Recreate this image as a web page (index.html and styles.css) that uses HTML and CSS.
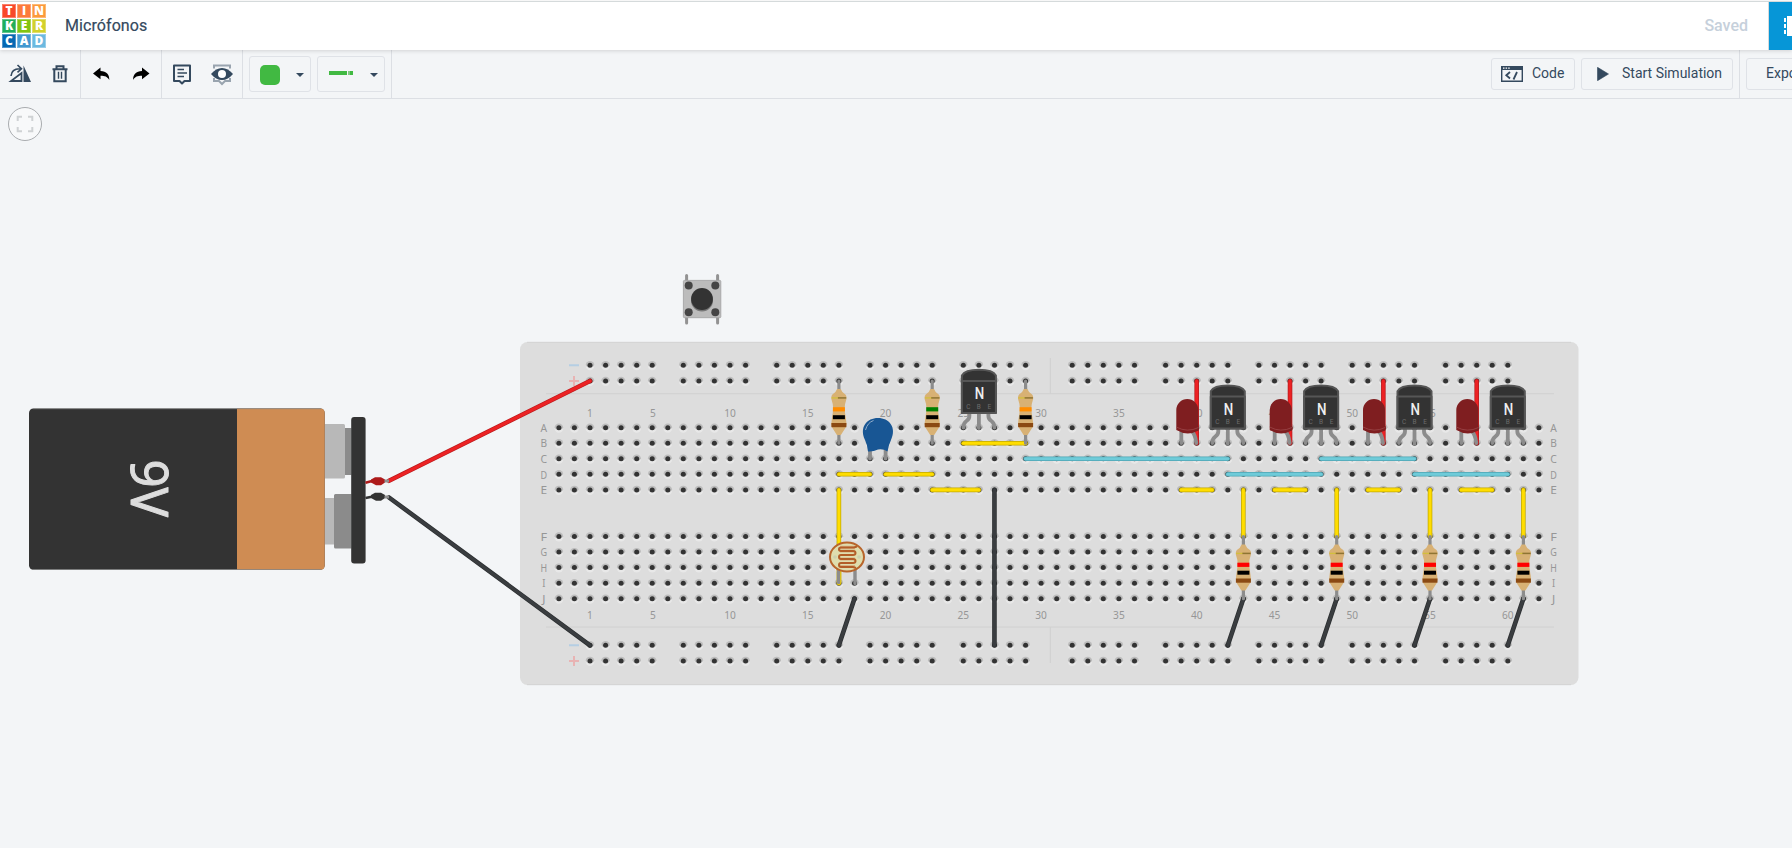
FILE: index.html
```html
<!DOCTYPE html>
<html lang="es">
<head>
<meta charset="utf-8">
<title>Micrófonos</title>
<link rel="stylesheet" href="styles.css">
</head>
<body>
<div class="app">
  <header class="header">
    <div class="logo">
      <span class="tile t1">T</span><span class="tile t2">I</span><span class="tile t3">N</span>
      <span class="tile t4">K</span><span class="tile t5">E</span><span class="tile t6">R</span>
      <span class="tile t7">C</span><span class="tile t8">A</span><span class="tile t9">D</span>
    </div>
    <h1 class="title">Micrófonos</h1>
    <span class="saved">Saved</span>
    <div class="view-tab">
      <svg width="24" height="48" viewBox="0 0 24 48"><path d="M19 14h14v20H19z" fill="#fff"/><path d="M16 16h2v4h-2zM16 22h2v4h-2zM16 28h2v4h-2z" fill="#fff"/></svg>
    </div>
  </header>
  <nav class="toolbar">
    <div class="group g-edit">
      <svg class="icon" width="24" height="24" viewBox="0 0 24 24"><path d="M15.500 3.500V20H23z" fill="#34495e"/><path d="M3 19H13.500V11z" fill="none" stroke="#34495e" stroke-width="1.800"/><path d="M3 14C3.500 8.500 7 6.500 12.500 6.800M9.500 3l4 3.800-4 3.500" fill="none" stroke="#34495e" stroke-width="1.600"/></svg>
      <svg class="icon" width="24" height="24" viewBox="0 0 24 24"><path d="M4.500 7.200h15M8.500 7V4.300h7V7M6.300 8v11.200h11.400V8" fill="none" stroke="#34495e" stroke-width="2"/><path d="M10.500 9.800v7M13.500 9.800v7" stroke="#34495e" stroke-width="1.400"/></svg>
    </div>
    <div class="group g-history">
      <svg class="icon" width="24" height="24" viewBox="0 0 24 24"><path d="M3 11.500L10.500 5.500v3.500c6 .2 9 3.500 8.800 9-2-3.300-4.300-4.200-8.800-4.200v3.500z" fill="#000"/></svg>
      <svg class="icon" width="24" height="24" viewBox="0 0 24 24"><path d="M20.500 11.500L13 5.500v3.500c-6 .2-9 3.500-9 9 2-3.300 4.500-4.200 9-4.200v3.500z" fill="#000"/></svg>
    </div>
    <div class="group g-notes">
      <svg class="icon" width="24" height="24" viewBox="0 0 24 24"><path d="M4 3.500h16v15.500h-5.500L12 21.500 9.500 19H4z" fill="none" stroke="#34495e" stroke-width="2" stroke-linejoin="round"/><path d="M7.500 7.500H14M7.500 11h9.500M7.500 14.500H14" stroke="#34495e" stroke-width="1.700"/></svg>
      <svg class="icon" width="24" height="24" viewBox="0 0 24 24"><path d="M4 6.500V3.500h16v3M4 16v3h5l3 3 3-3h5v-3" fill="none" stroke="#99a4af" stroke-width="2"/><path d="M1 12Q6 6 12 6t11 6q-5 6-11 6T1 12z" fill="#34495e"/><circle cx="12" cy="12" r="4" fill="#fff"/></svg>
    </div>
    <div class="group g-wire">
      <button class="drop drop-color"><i class="swatch"></i><i class="caret"></i></button>
      <button class="drop drop-type"><i class="wire-sample"></i><i class="wire-tip"></i><i class="caret"></i></button>
    </div>
    <div class="spacer"></div>
    <button class="btn btn-code">
      <svg width="22" height="16" viewBox="0 0 22 16"><path d="M.7.700h20.600v14.600H.700z" fill="none" stroke="#34495e" stroke-width="1.400"/><path d="M0 0h22v4H0z" fill="#34495e"/><path d="M2 1.400h1.500v1.300H2zM4.600 1.400h1.500v1.300H4.600zM7.200 1.400h1.500v1.300H7.200z" fill="#fff"/><path d="M9 6L5.300 9.300 9 12.500M16 6l-3.500 7.500" fill="none" stroke="#34495e" stroke-width="1.800"/></svg>
      <span>Code</span>
    </button>
    <button class="btn btn-sim">
      <svg width="12" height="14" viewBox="0 0 12 14"><path d="M.5.300L11.500 7 .5 13.700z" fill="#34495e" stroke="#34495e" stroke-width=".6"/></svg>
      <span>Start Simulation</span>
    </button>
    <div class="group g-export"><button class="btn btn-export"><span>Export</span></button></div>
  </nav>
  <main class="workspace">
    <svg class="circuit" id="circuit" width="1792" height="749" viewBox="0 99 1792 749">
      <defs>
        <g id="hole">
          <circle cy=".7" r="4.300" fill="#e8e8e8"/>
          <path d="M-4.300-.2A4.300 4 0 0 1 4.300-.2L3 1.500H-3z" fill="#bcbcbc"/>
          <circle cy="0" r="2.500" fill="#333"/>
        </g>
        <g id="resistor">
          <path d="M0 0V62.200" stroke="#8c8c8c" stroke-width="3.200" stroke-linecap="round"/>
          <path d="M-1.800 8H1.800Q3 11.500 6.500 13.500 8.500 16 7 20 5.800 23 5.800 27T7 37.500Q8.200 43 6.800 46.500L2 54H-2L-6.800 46.500Q-8.200 43-7 37.500-5.800 31-5.800 27T-7 20Q-8.500 16-6.500 13.500-3 11.500-1.800 8z" fill="#d8b174"/>
          <path d="M-7.300 16.900H0" stroke="#d3bf3c" stroke-width="1.300"/><path d="M-1 16.900H7.300" stroke="#8f7432" stroke-width="1.500"/>
          <path d="M-6 34.200H6V38.200H-6z" fill="#000"/><path d="M-7.500 42H7.500V46.200H-7.500z" fill="#8b4a13"/>
        </g>
        <g id="transistor">
          <path d="M-9.500 32V35Q-9.500 38-12.500 40T-15.500 46.500M0 32V47M9.500 32V35Q9.500 38 12.500 40T15.500 46.500" fill="none" stroke="#8c8c8c" stroke-width="3.800" stroke-linecap="round"/>
          <path d="M-17-1V-5.500Q-14-11.200 0-11.200T17-5.500V32H-17z" fill="#333" stroke="#555" stroke-width="2" stroke-linejoin="round"/>
          <path d="M-17 0H17V32H-17z" fill="#333" stroke="#565656" stroke-width="2" stroke-linejoin="round"/>
          <text x=".7" y="18.200" class="chip-name" textLength="9.500" lengthAdjust="spacingAndGlyphs">N</text>
          <text x="-10.500" y="27.700" class="chip-pin">C</text><text x="0" y="27.700" class="chip-pin">B</text><text x="10.500" y="27.700" class="chip-pin">E</text>
        </g>
        <g id="led">
          <path d="M0 32V44M10 32Q14 35 15 44" fill="none" stroke="#8c8c8c" stroke-width="3.800" stroke-linecap="round"/>
          <path d="M-5 11A11 11 0 0 1 17 11V27Q18.500 29 17.300 31.500 6 37.500-5 31z" fill="#7f1e20"/>
          <path d="M-5 28Q6 34 17.300 28.500" fill="none" stroke="#9c474a" stroke-width=".8"/>
        </g>
      </defs>
      <g>
        <rect x="520" y="342" width="1058.500" height="343" rx="7.500" fill="#ddd"/>
        <path d="M527 684.700H1571M527 342.300H1571" stroke="#cfd1d1" stroke-width=".8"/>
        <path d="M546 393.700H1554M546 627H1554M1050.300 358V393.700M1050.300 627V663" stroke="#d0d0d0" stroke-width="1"/>
        <path d="M569 365.200h10M569 645.200h10" stroke="#b5cee3" stroke-width="2"/>
        <path d="M569 381h10M574 376v10M569 661h10M574 656v10" stroke="#e8b3b3" stroke-width="2"/>
      </g>
      <g id="holes"></g>
      <g id="labels" class="board-label"></g>
      <g id="push-button">
        <path d="M686.600 275.500V323M717.600 275.500V323" stroke="#929292" stroke-width="3" stroke-linecap="round"/>
        <rect x="683.400" y="280.400" width="37.400" height="37.300" rx="1" fill="#bcbcbc" stroke="#a5a5a5" stroke-width=".9"/>
        <g fill="#454545"><circle cx="688.700" cy="285.600" r="4"/><circle cx="715.300" cy="285.600" r="4"/><circle cx="688.700" cy="312.300" r="4"/><circle cx="715.300" cy="312.300" r="4"/></g>
        <circle cx="702" cy="300.500" r="11" fill="#777"/><circle cx="702" cy="299" r="10.900" fill="#333"/>
      </g>
      <g id="battery">
        <path d="M325 424H343.500Q345 424 345 425.500V477Q345 478.500 343.500 478.500H325zM325 498H334V544.500H325z" fill="#b8b8b8"/>
        <path d="M345 428H351.500V475H345zM351.500 494H335.500Q334 494 334 495.500V547Q334 548.500 335.500 548.500H351.500z" fill="#8b8b8b"/>
        <rect x="29" y="408.500" width="295.700" height="161.300" rx="4.500" fill="#333"/>
        <path d="M237 408.500H320.200Q324.700 408.500 324.700 413V565.300Q324.700 569.800 320.200 569.800H237z" fill="#cf8c53"/>
        <path d="M33 408.700H321M33 569.500H321" stroke="#888" stroke-width=".7"/>
        <rect x="351.200" y="417" width="14.400" height="146.600" rx="3" fill="#333"/>
        <text class="nine-volt" transform="translate(131 459.500) rotate(90)" textLength="57.500" lengthAdjust="spacingAndGlyphs">9V</text>
        <path d="M365.500 482.700L373 480.800" stroke="#ad1a1a" stroke-width="2.600"/><path d="M371 479.500L375 477.200H381L385 479.500V482.500L381 485.200H376L371 482.500z" fill="#ad1a1a"/>
        <path d="M365.500 498L373 496.500" stroke="#333" stroke-width="2.600"/><path d="M371 495L375 492.800H381L385 495V498L381 500.800H376L371 498z" fill="#333"/>
      </g>
      <g id="wires"></g>
      <path d="M384.500 481H389M384.500 497H389" stroke="#909090" stroke-width="3"/>
      <g id="parts"></g>
      <g id="capacitor">
        <path d="M870 448V458.500M885.600 448V458.500" stroke="#8c8c8c" stroke-width="3.800" stroke-linecap="round"/>
        <path d="M868 451.500Q867.500 445 865 440C859 427 867 418 878 418S897 427 891 440Q888.500 445 887.500 451.500 883 448.500 878 449.500 873 452 868 451.500z" fill="#185694"/>
        <path d="M865.500 430Q867.500 422.500 873.500 420.500" stroke="#8facca" stroke-width="1" fill="none"/>
      </g>
      <g id="photoresistor">
        <path d="M838.600 568V582.500M855 568V583.500" stroke="#8c8c8c" stroke-width="3.400" stroke-linecap="round"/>
        <path d="M840.800 570V583" stroke="#e0c41a" stroke-width="1"/>
        <ellipse cx="847" cy="557" rx="17" ry="14.500" fill="#dfddae" stroke="#b8652b" stroke-width="2"/>
        <circle cx="835" cy="557" r="1.800" fill="#ccd0ae"/><circle cx="859" cy="557" r="1.800" fill="#ccd0ae"/>
        <path d="M840 547.300H855M840 551H855M840 559H855M840 566.500H855" stroke="#d7b184" stroke-width="3"/>
        <path d="M857 546.500L854 547.500H841Q839 547.500 839 549.200T841 551H853Q855.500 551 855.500 553T853 555H841Q839 555 839 557T841 559H853Q855.500 559 855.500 561T853 563H841Q839 563 839 565T841 567H853L856 568" fill="none" stroke="#b35e28" stroke-width="2"/>
      </g>
    </svg>
    <button class="fit"><svg width="18" height="18" viewBox="0 0 18 18"><path d="M1.700 6V1.700H6M12 1.700h4.300V6M16.300 12v4.300H12M6 16.300H1.700V12" fill="none" stroke="#cfd2d4" stroke-width="2"/></svg></button>
  </main>
</div>
<script src="board.js"></script>
</body>
</html>
```

FILE: styles.css
```css
* { box-sizing: border-box; }
body { margin: 0; width: 1792px; height: 848px; overflow: hidden; background: #f3f5f7; font-family: Roboto, sans-serif; color: #34495e; }
button { font: inherit; color: inherit; background: transparent; padding: 0; margin: 0; }
.app { display: flex; flex-direction: column; height: 848px; border-top: 1px solid #fff; }
.header { height: 49px; flex: none; background: #fff; border-top: 1px solid #d5dadb; display: flex; align-items: center; box-shadow: 0 1px 4px rgba(0,0,0,.14); position: relative; z-index: 1; }
.logo { display: grid; grid-template-columns: repeat(3, 14px); grid-auto-rows: 14px; gap: 1px; margin-left: 2px; }
.tile { color: #fff; font: 800 12px/12px "Open Sans", sans-serif; text-align: center; border: 1px solid rgba(255,255,255,.3); }
.t1 { background: #f9482a; } .t2 { background: #fd7a3b; } .t3 { background: #fc9a3a; }
.t4 { background: #20ae5d; } .t5 { background: #83c412; } .t6 { background: #d3d12c; }
.t7 { background: #0668b3; } .t8 { background: #4298d0; } .t9 { background: #6cb9e0; }
.title { margin: 0 0 0 19px; font-size: 16px; font-weight: 400; line-height: 20px; letter-spacing: .08px; -webkit-text-stroke: .2px #34495e; }
.saved { margin-left: auto; margin-right: 20px; font-size: 16px; line-height: 20px; font-weight: 500; color: #c6d0db; }
.view-tab { width: 24px; height: 48px; background: #0696d7; border-left: 1px solid #d5dadb; overflow: hidden; }
.view-tab svg { display: block; margin-left: -1px; }
.toolbar { height: 49px; flex: none; display: flex; align-items: center; border-bottom: 1px solid #dcdfe4; overflow: hidden; }
.group { height: 48px; flex: none; display: flex; align-items: center; border-right: 1px solid #dcdfe4; }
.icon { display: block; flex: none; }
.g-edit { width: 81px; padding-left: 8px; gap: 16px; }
.g-history { width: 81px; padding-left: 9px; gap: 15px; }
.g-notes { width: 81px; padding-left: 8px; gap: 16px; }
.g-wire { width: 149px; padding-left: 6px; gap: 6px; }
.drop { height: 36px; border: 1px solid #dfe2e7; border-radius: 3px; display: flex; align-items: center; }
.drop i { flex: none; }
.drop-color { width: 62px; padding-left: 10px; }
.drop-type { width: 68px; padding-left: 11px; }
.swatch { width: 20px; height: 20px; border-radius: 5px; background: #41b942; margin: 1px 16px 0 0; }
.wire-sample { width: 18px; height: 4px; background: #41b942; margin-top: -3px; }
.wire-tip { width: 5px; height: 4px; background: linear-gradient(90deg, #7fca80 40%, #41b942 40%); margin: -3px 17px 0 1px; }
.caret { border: 4.500px solid transparent; border-top-color: #34495e; border-bottom: 0; margin-top: 1px; }
.spacer { flex: 1; }
.btn { flex: none; height: 32px; border: 1px solid #dfe2e7; border-radius: 3px; display: flex; align-items: center; font-size: 14px; line-height: 20px; white-space: nowrap; }
.btn span { margin-top: -2px; }
.btn-code { width: 84px; padding-left: 9px; gap: 9px; margin-right: 6px; }
.btn-sim { width: 152px; padding-left: 15px; gap: 13px; margin-right: 6px; }
.g-export { width: 53px; border-right: 0; border-left: 1px solid #dcdfe4; padding-left: 6px; overflow: hidden; }
.btn-export { width: 80px; padding-left: 19px; }
.workspace { flex: 1; position: relative; overflow: hidden; }
.circuit { display: block; }
.fit { position: absolute; left: 8px; top: 8px; width: 34px; height: 34px; border: 1px solid #a9acaf; border-radius: 50%; background: #f8f9fa; display: flex; align-items: center; justify-content: center; }
.board-label { font: 11.500px "Noto Sans", sans-serif; fill: #969696; text-anchor: middle; }
.nine-volt { font: 51px "Noto Sans", sans-serif; fill: #ddd; stroke: #ddd; stroke-width: 1px; stroke-linejoin: round; }
.chip-name { font: 500 16.500px Roboto, sans-serif; fill: #eee; text-anchor: middle; }
.chip-pin { font: 6.500px Roboto, sans-serif; fill: #6c6c6c; text-anchor: middle; }
```

FILE: board.js
```js
const NS = "http://www.w3.org/2000/svg";
const STEP = 15.556;
const colX = c => 590 + (c - 1) * STEP;
const rowY = { "-": 365.3, "+": 381, A: 427.7, B: 443.2, C: 458.7, D: 474.3, E: 489.9,
  F: 536.5, G: 552.1, H: 567.6, I: 583.2, J: 598.7, n: 645.3, p: 660.9 };

function add(parent, tag, attrs, text) {
  const el = document.createElementNS(NS, tag);
  for (const k in attrs) el.setAttribute(k, attrs[k]);
  if (text) el.textContent = text;
  document.getElementById(parent).appendChild(el);
  return el;
}
function place(parent, id, x, y) {
  add(parent, "use", { href: "#" + id, x: x.toFixed(1), y: y.toFixed(1) });
}

// Terminal rows
for (const r of "ABCDEFGHIJ") {
  for (let c = -1; c <= 62; c++) place("holes", "hole", colX(c), rowY[r]);
  const textLength = r === "I" || r === "J" ? 3.2 : 6.6;
  for (const x of [543.8, 1553.5])
    add("labels", "text", { x, y: rowY[r] + 4.2, textLength, lengthAdjust: "spacingAndGlyphs" }, r);
}
// Power rails
for (const start of [1, 7, 13, 19, 25, 32, 38, 44, 50, 56])
  for (let c = start; c < start + 5; c++)
    for (const r of "-+np") place("holes", "hole", colX(c), rowY[r]);
// Column numbers
for (const n of [1, 5, 10, 15, 20, 25, 30, 35, 40, 45, 50, 55, 60])
  for (const y of [417, 619])
    add("labels", "text", { x: colX(n) + (n === 5 ? .8 : 0), y, textLength: n < 10 ? 5.8 : 11.6, lengthAdjust: "spacingAndGlyphs" }, String(n));

const COLORS = { yellow: ["#ffdd00", "#c2a800"], blue: ["#6fcbd9", "#4ea5b3"], red: ["#ec2224", "#b91c1e"], black: ["#3a3d40", "#2c2f31"] };
function wire(color, x1, y1, x2, y2) {
  const [fill, edge] = COLORS[color];
  const d = `M${x1} ${y1}L${x2} ${y2}`;
  add("wires", "path", { d, stroke: edge, "stroke-width": 4.6, "stroke-linecap": "round" });
  add("wires", "path", { d, stroke: fill, "stroke-width": 3.1, "stroke-linecap": "round" });
}
const link = (color, c1, r1, c2, r2) => wire(color, colX(c1), rowY[r1], colX(c2), rowY[r2]);

wire("red", 389, 480.800, 590, 381);
wire("black", 389, 497.500, 590, 645.300);
[[25, "B", 29, "B"], [17, "D", 19, "D"], [20, "D", 23, "D"], [23, "E", 26, "E"], [17, "E", 17, "I"]].forEach(w => link("yellow", ...w));
[[29, "C", 42, "C"], [42, "D", 48, "D"], [48, "C", 54, "C"], [54, "D", 60, "D"]].forEach(w => link("blue", ...w));
link("black", 18, "J", 17, "n");
link("black", 27, "E", 27, "n");

function resistor(c, row, band) {
  place("parts", "resistor", colX(c), rowY[row]);
  add("parts", "rect", { x: colX(c) - 6, y: rowY[row] + 26.2, width: 12, height: 4.200, fill: band });
}
resistor(17, "+", "#ff8c00");
resistor(23, "+", "#008000");
resistor(29, "+", "#ff8c00");
place("parts", "transistor", colX(26), 381);

// Four identical LED output stages
for (const c of [39, 45, 51, 57]) {
  link("yellow", c, "E", c + 2, "E");
  link("yellow", c + 4, "E", c + 4, "F");
  link("black", c + 4, "J", c + 3, "n");
  link("red", c + 1, "+", c + 1, "B");
  resistor(c + 4, "F", "#ff0000");
  place("parts", "led", colX(c) + .2, 399);
  place("parts", "transistor", colX(c + 3), 396.600);
}
```
